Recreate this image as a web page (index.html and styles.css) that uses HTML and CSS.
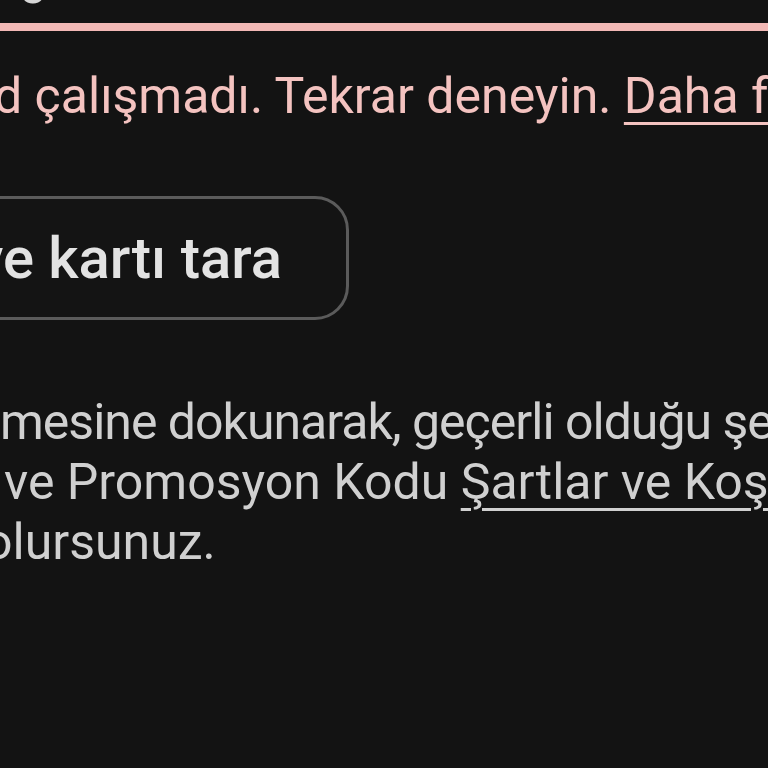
FILE: index.html
```html
<!DOCTYPE html>
<html lang="tr">
<head>
    <meta charset="UTF-8">
    <meta name="viewport" content="width=device-width, initial-scale=1.0">
    <title>Promosyon kodu</title>
    <link rel="stylesheet" href="styles.css">
</head>
<body>
    <div class="field">
        <div class="field-value"><span class="field-text">o</span></div>
        <div class="field-line"></div>
    </div>

    <p class="error"><span class="clip">Ko</span>d çalışmadı. Tekrar deneyin. <a href="#" class="error-link">Daha fazla bilgi</a></p>

    <div class="actions">
        <button class="scan-button">Kamerayla hediye kartı tara</button>
    </div>

    <div class="terms">
        <div class="terms-line tight"><span class="clip">Uygula düğ</span>mesine dokunarak, geçerli olduğu şekilde</div>
        <div class="terms-line indent"><span class="clip">Google Play </span>ve Promosyon Kodu <a href="#" class="terms-link">Şartlar ve Koşulları'nı</a> kabul etmiş</div>
        <div class="terms-line outdent">olursunuz.</div>
    </div>
</body>
</html>
```

FILE: styles.css
```css
html, body {
    margin: 0;
    padding: 0;
}
body {
    width: 768px;
    height: 768px;
    overflow: hidden;
    background-color: #131313;
    font-family: Roboto, "Noto Sans", sans-serif;
}
.clip {
    display: inline-block;
    width: 0;
    overflow: hidden;
    vertical-align: bottom;
}
.field {
    display: flex;
    flex-direction: column;
}
.field-value {
    height: 23px;
    overflow: hidden;
    position: relative;
}
.field-text {
    position: absolute;
    left: 18px;
    top: -44px;
    font-size: 52px;
    line-height: 60px;
    color: #d6d6d6;
}
.field-line {
    height: 8px;
    background-color: #f2b8b5;
}
.error {
    margin: 35px 0 0 -6px;
    white-space: nowrap;
    font-size: 50px;
    line-height: 60px;
    color: #f4c3c0;
}
.error-link {
    color: inherit;
    text-decoration: underline;
    text-decoration-thickness: 3px;
    text-underline-offset: 9px;
}
.actions {
    margin-top: 70px;
    display: flex;
    justify-content: flex-end;
    width: 349px;
    overflow: hidden;
}
.scan-button {
    flex: none;
    height: 124px;
    padding: 0 64px 0 40px;
    border: 3px solid #5b5b5b;
    border-radius: 34px;
    background-color: #141414;
    color: #e3e3e3;
    font-family: Roboto, "Noto Sans", sans-serif;
    font-size: 58px;
    font-weight: 500;
    white-space: nowrap;
}
.terms {
    margin-top: 72px;
    font-size: 50px;
    line-height: 60px;
    color: #d0d0d0;
    white-space: nowrap;
}
.tight {
    letter-spacing: -1px;
}
.indent {
    padding-left: 4px;
}
.outdent {
    margin-left: -16px;
}
.terms-link {
    color: inherit;
    text-decoration: underline;
    text-decoration-thickness: 3px;
    text-underline-offset: 9px;
}
```
